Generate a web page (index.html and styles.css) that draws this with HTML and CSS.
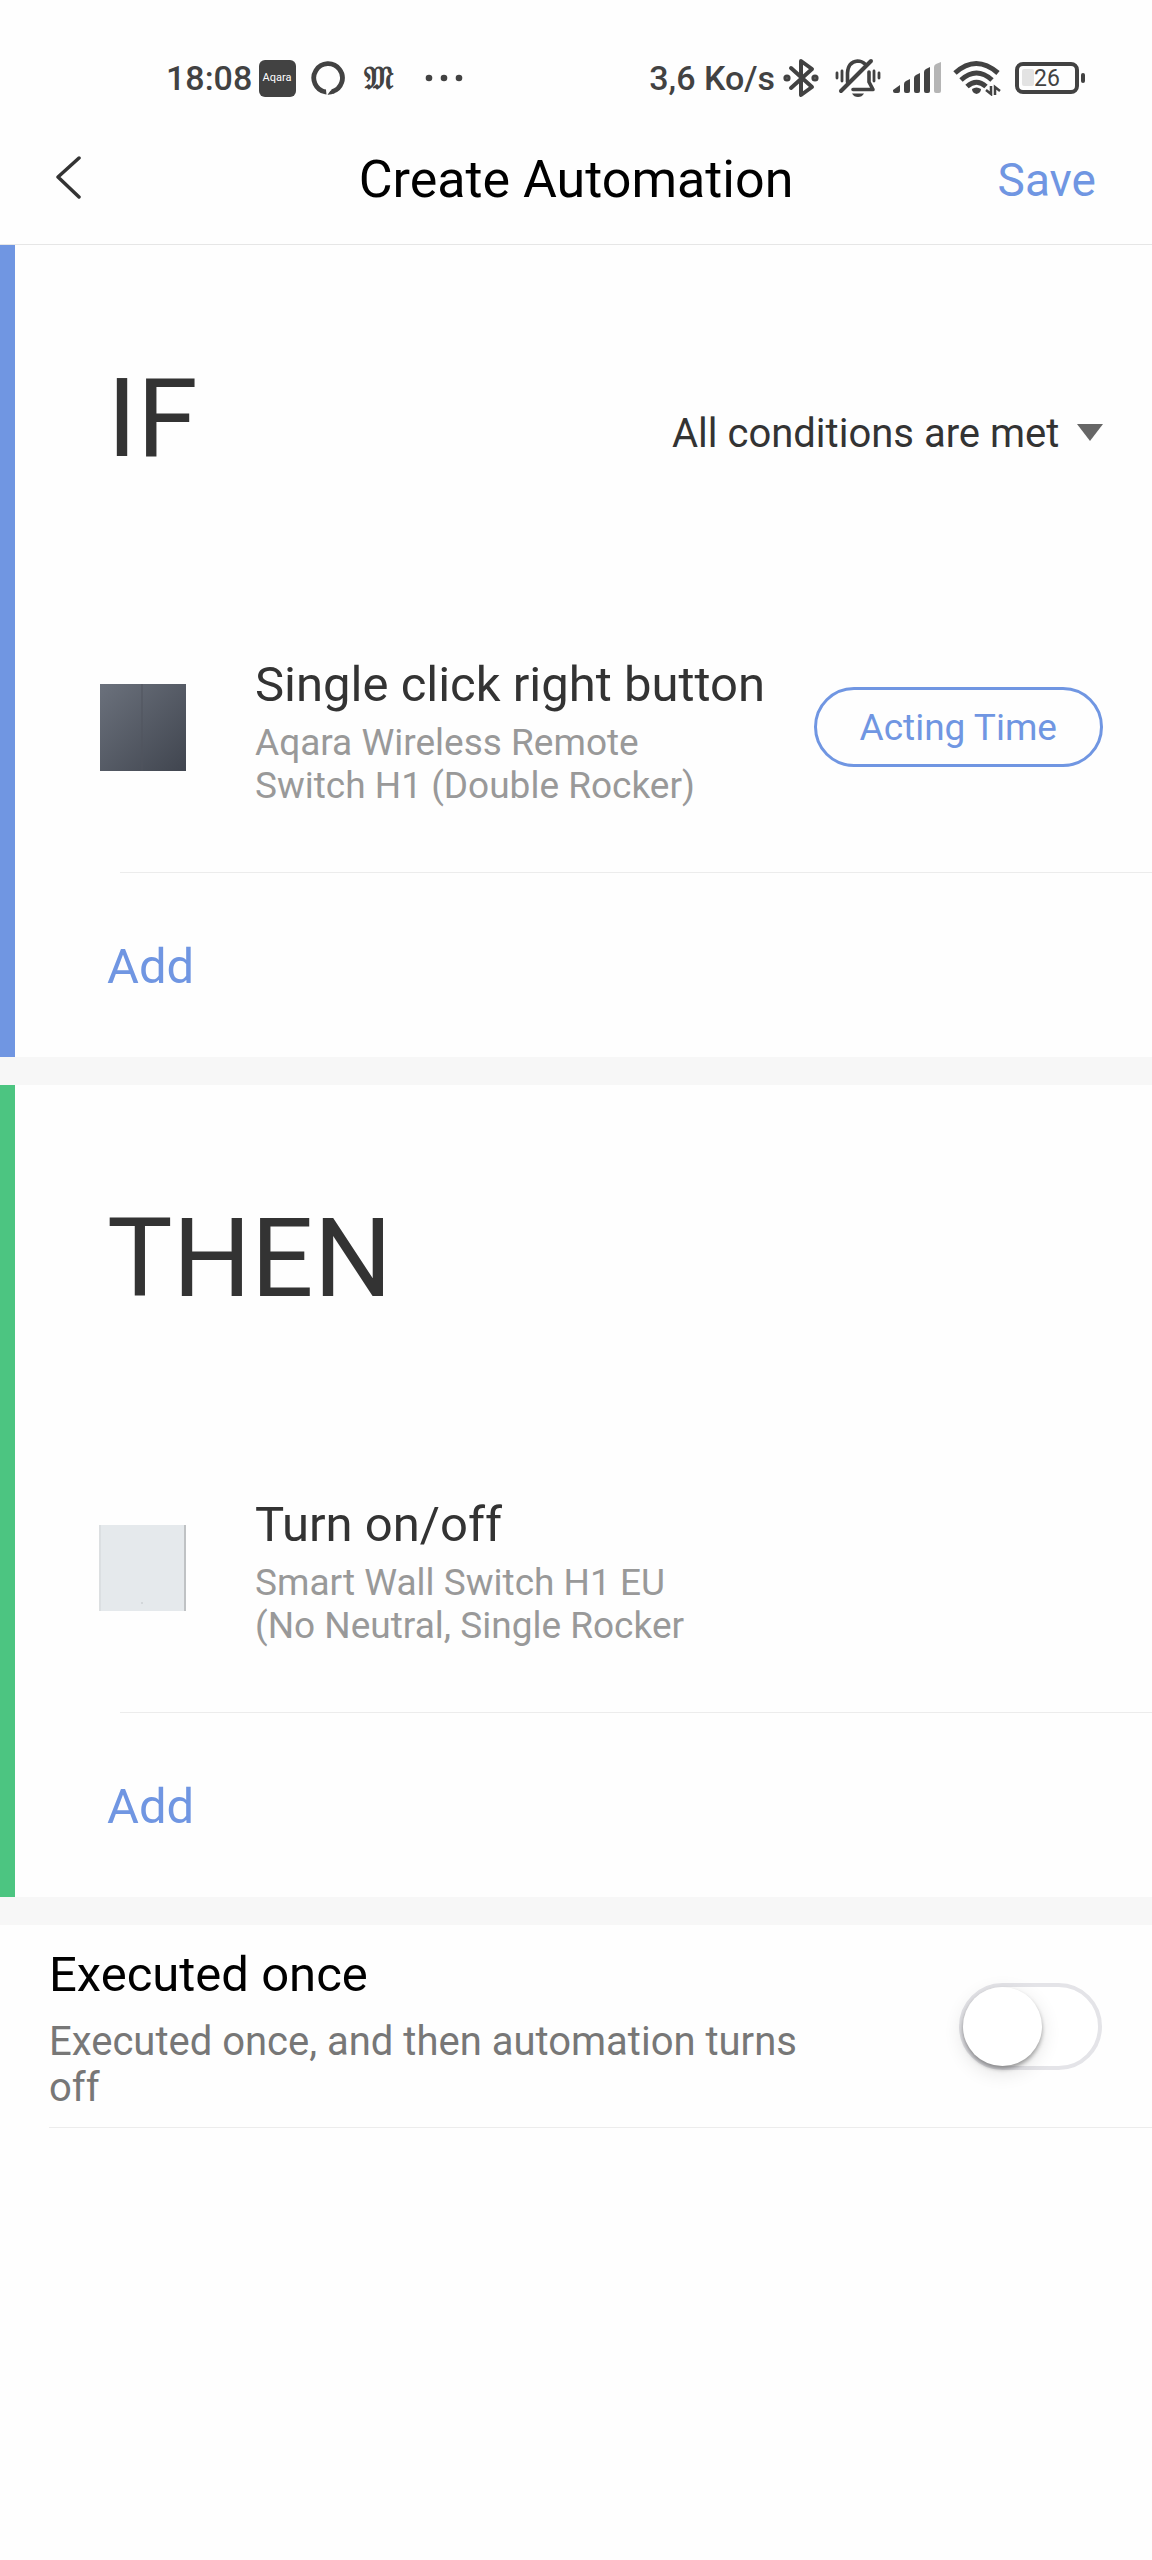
FILE: index.html
```html
<!DOCTYPE html>
<html lang="en">
<head>
  <meta charset="UTF-8" />
  <meta name="viewport" content="width=device-width, initial-scale=1.0" />
  <title>Create Automation</title>
  <link rel="stylesheet" href="styles.css">
</head>
<body>
  <div class="status-bar">
    <div class="status-left">
      <span>18:08</span>
      <svg class="app-icon" width="37" height="37" viewBox="0 0 37 37">
        <rect width="37" height="37" rx="6" fill="#424242"/>
        <text x="18" y="21" text-anchor="middle" font-size="11" fill="#fff">Aqara</text>
      </svg>
      <svg class="ring-icon" width="34" height="34" viewBox="0 0 34 34">
        <path d="M14.500 31A14.300 14.300 0 1 1 21 30.700" fill="none" stroke="#424242" stroke-width="4.800"/>
        <path d="M14 28.300V33.300L15.500 33.500L15 29ZM22 28Q18 30 16.500 33.800Q20 34 24 32Z" fill="#424242"/>
      </svg>
      <span class="news-icon">𝔐</span>
      <svg class="dots-icon" width="38" height="8" viewBox="0 0 38 8" fill="#424242">
        <circle cx="4" cy="4" r="3.300"/>
        <circle cx="19" cy="4" r="3.300"/>
        <circle cx="34" cy="4" r="3.300"/>
      </svg>
    </div>
    <div class="status-right">
      <span>3,6 Ko/s</span>
      <svg width="36" height="40" viewBox="0 0 36 40" fill="none" stroke="#424242" stroke-width="4" stroke-linejoin="round" stroke-linecap="round">
        <path d="M8 10L29 29L18 37V3L29 11L8 30"/>
        <circle cx="4" cy="20" r="1.600"/>
        <circle cx="32" cy="20" r="1.600"/>
      </svg>
      <svg class="bell-icon" width="46" height="40" viewBox="0 0 46 40" fill="none" stroke="#424242" stroke-width="3.600" stroke-linecap="round">
        <path d="M2 15V20M7 13V23M39 13V23M44 15V20" stroke-width="2.800"/>
        <path d="M12.500 24V15Q13 4 22.500 3Q27 3 30 6M34 14V24L38 31.500H18" stroke-linejoin="round"/>
        <path d="M36 3L6 33" stroke-width="4"/>
        <path d="M17 35.500H29Q27 39 23 39Q19 39 17 35.500Z" fill="#424242" stroke="none"/>
      </svg>
      <svg class="signal-icon" width="48" height="32" viewBox="0 0 48 32" fill="#424242">
        <path d="M0 28L7 23V29Q7 31 5 31H2Q0 31 0 29Z"/>
        <path d="M11 22Q11 20 13 19L17 17V29Q17 31 15 31H13Q11 31 11 29Z"/>
        <path d="M21 16Q21 14 23 13L27 11V29Q27 31 25 31H23Q21 31 21 29Z"/>
        <path d="M31 10Q31 8 33 7L37 5V29Q37 31 35 31H33Q31 31 31 29Z"/>
        <path d="M41 5Q41 3 43 2L48 0V29Q48 31 46 31H43Q41 31 41 29Z" fill="#b5b5b5"/>
      </svg>
      <svg width="48" height="36" viewBox="0 0 48 36" fill="none" stroke="#424242" stroke-width="5">
        <path d="M2 13Q23 -6 45 13"/>
        <path d="M8 20Q23.500 6 39 20"/>
        <path d="M14 26.500Q23.500 18 33 26.500"/>
        <path d="M19 29Q23.500 26 28 29Q28 33 23.500 34Q19 33 19 29Z" fill="#424242" stroke="none"/>
        <path d="M38 26V34L33 30M42 35V27L47 31" stroke-width="2.500"/>
      </svg>
      <svg class="battery-icon" width="70" height="32" viewBox="0 0 70 32">
        <rect x="2" y="2" width="60" height="28" rx="6" fill="none" stroke="#424242" stroke-width="4"/>
        <rect x="7" y="7" width="12" height="17" rx="2" fill="#e3e3e3"/>
        <rect x="66" y="11" width="4" height="10" rx="2" fill="#424242"/>
        <text x="32" y="24" text-anchor="middle" font-size="23" fill="#424242">26</text>
      </svg>
    </div>
  </div>

  <header>
    <button class="back-button" aria-label="Back">
      <svg width="25" height="43" viewBox="0 0 25 43" fill="none" stroke="#333" stroke-width="3.500" stroke-linecap="round" stroke-linejoin="round">
        <path d="M23 2L2 21L23 41"/>
      </svg>
    </button>
    <h1>Create Automation</h1>
    <button class="save-button">Save</button>
  </header>

  <main>
    <section class="card card-if">
      <div class="card-head">
        <h2>IF</h2>
        <div class="match">
          <select aria-label="Condition matching">
            <option>All conditions are met</option>
          </select>
          <svg width="26" height="20" viewBox="0 0 26 20"><path d="M0 0H26L13 17Z" fill="#666"/></svg>
        </div>
      </div>
      <div class="item">
        <svg class="thumb" width="87" height="87" viewBox="0 0 87 87">
          <defs>
            <linearGradient id="dark" x1="0" y1="0" x2="1" y2="1">
              <stop offset="0" stop-color="#6b717c"/>
              <stop offset="1" stop-color="#40454f"/>
            </linearGradient>
          </defs>
          <rect x="1" width="86" height="87" fill="url(#dark)"/>
          <path d="M43 0V87" stroke="#50555f"/>
        </svg>
        <div class="item-text">
          <h3>Single click right button</h3>
          <p>Aqara Wireless Remote Switch H1 (Double Rocker)</p>
        </div>
        <button class="time-button">Acting Time</button>
      </div>
      <hr>
      <button class="add-button">Add</button>
    </section>

    <section class="card card-then">
      <div class="card-head">
        <h2>THEN</h2>
      </div>
      <div class="item">
        <svg class="thumb" width="87" height="87" viewBox="0 0 87 87">
          <rect y="1" width="87" height="86" fill="#e5e9ec"/>
          <path d="M1 1V87" stroke="#d2d5d7"/>
          <path d="M86 1V87" stroke="#bfc2c4" stroke-width="2"/>
          <circle cx="43" cy="79" r="1" fill="#cdd1d4"/>
        </svg>
        <div class="item-text">
          <h3>Turn on/off</h3>
          <p>Smart Wall Switch H1 EU (No Neutral, Single Rocker</p>
        </div>
      </div>
      <hr>
      <button class="add-button">Add</button>
    </section>

    <section class="once">
      <label for="once">
        <span class="once-title">Executed once</span>
        <span class="once-desc">Executed once, and then automation turns off</span>
      </label>
      <input type="checkbox" id="once" class="toggle">
    </section>
    <hr class="once-line">
  </main>
</body>
</html>
```

FILE: styles.css
```css
* {
  box-sizing: border-box;
}

body {
  font-family: Roboto, sans-serif;
  margin: 0;
  background: #fefefe;
  color: #333;
}

h1, h2, h3, p {
  margin: 0;
  font-weight: 400;
}

button, select {
  font-family: inherit;
  background: none;
  border: none;
  padding: 0;
  cursor: pointer;
}

svg {
  display: block;
  flex-shrink: 0;
}

hr {
  height: 1px;
  margin: 0 0 0 105px;
  border: none;
  background: #ececec;
}

.status-bar {
  display: flex;
  justify-content: space-between;
  padding: 56px 67px 16px 166px;
  font-size: 34px;
  font-weight: 500;
  line-height: 44px;
  color: #424242;
}

.status-left, .status-right {
  display: flex;
  align-items: center;
}

.status-left {
  gap: 7px;
}

.status-right {
  gap: 12px;
}

.status-right span {
  margin-right: -4px;
}

.status-bar svg text {
  font-weight: 400;
}

.ring-icon {
  margin-left: 8px;
}

.news-icon {
  margin-left: 12px;
  font-family: "DejaVu Sans", sans-serif;
  font-weight: 700;
  font-size: 32px;
}

.dots-icon {
  margin-left: 25px;
}

.bell-icon {
  margin-left: 4px;
}

.battery-icon {
  margin-left: 2px;
}

header {
  display: grid;
  grid-template-columns: 1fr auto 1fr;
  align-items: center;
  height: 129px;
  padding: 0 56px;
  border-bottom: 1px solid #e6e6e6;
}

header h1 {
  font-size: 52px;
  line-height: 60px;
  color: #000;
}

.back-button {
  justify-self: start;
  padding-bottom: 6px;
}

.save-button {
  justify-self: end;
  font-size: 46px;
  line-height: 56px;
  color: #7096e2;
}

main {
  background: #fefefe;
}

.card {
  border-left: 15px solid;
  margin-bottom: 28px;
  box-shadow: 0 28px 0 #f7f7f7;
}

.card-if {
  border-color: #7096e2;
}

.card-then {
  border-color: #4cc581;
}

.card-head {
  display: flex;
  justify-content: space-between;
  align-items: center;
  height: 348px;
  padding: 0 49px 0 92px;
}

.card-head h2 {
  font-size: 110px;
  line-height: 130px;
}

.match {
  display: flex;
  align-items: center;
  gap: 17px;
  padding-top: 30px;
}

.match select {
  appearance: none;
  font-size: 40px;
  line-height: 46px;
  color: #333;
}

.item {
  display: flex;
  align-items: center;
  padding: 54px 49px 65px 84px;
}

.item-text {
  flex: 1;
  padding-top: 10px;
  margin-left: 69px;
}

.item-text h3 {
  font-size: 49px;
  line-height: 56px;
  margin-bottom: 8px;
}

.item-text p {
  max-width: 450px;
  font-size: 37px;
  line-height: 43px;
  color: #999;
}

.time-button {
  padding: 2px 43px 0;
  border: 3px solid #7096e2;
  border-radius: 40px;
  font-size: 37px;
  line-height: 72px;
  color: #7096e2;
}

.add-button {
  display: block;
  padding: 66px 92px 62px;
  font-size: 49px;
  line-height: 56px;
  color: #7096e2;
}

.once {
  display: flex;
  align-items: center;
  gap: 120px;
  padding: 0 50px 0 49px;
}

.once label {
  flex: 1;
  padding: 22px 0 16px;
}

.once-title, .once-desc {
  display: block;
}

.once-title {
  margin-bottom: 16px;
  font-size: 49px;
  line-height: 56px;
  color: #000;
}

.once-desc {
  font-size: 40px;
  line-height: 46px;
  color: #777;
}

.toggle {
  appearance: none;
  flex-shrink: 0;
  width: 143px;
  height: 87px;
  margin: 0;
  border: 4px solid #e4e4e8;
  border-radius: 44px;
  background: #fff;
}

.toggle::before {
  content: "";
  display: block;
  width: 79px;
  height: 79px;
  border-radius: 50%;
  background: #fff;
  box-shadow: 0 3px 4px rgba(0,0,0,0.35), 0 6px 20px rgba(0,0,0,0.12);
}

.toggle:checked {
  background: #7096e2;
}

.toggle:checked::before {
  margin-left: auto;
}

.once-line {
  margin-left: 49px;
}
```
